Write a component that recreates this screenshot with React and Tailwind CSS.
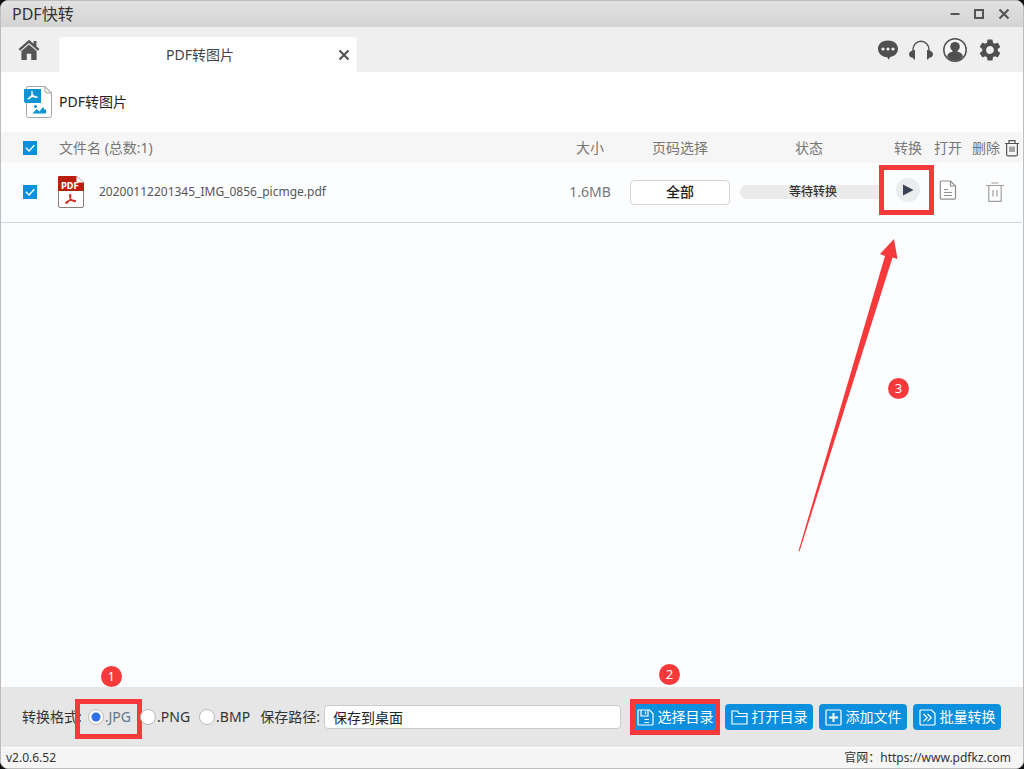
import { useState } from 'react'

const FORMATS = ['JPG', 'PNG', 'BMP']

const FILES = [
  { id: 1, name: '20200112201345_IMG_0856_picmge.pdf', size: '1.6MB', pages: '全部', status: '等待转换' },
]

function MinimizeIcon() {
  return (
    <svg width="12" height="12" viewBox="0 0 12 12" stroke="#555" strokeWidth="2">
      <path d="M1.5 6h9" />
    </svg>
  )
}

function MaximizeIcon() {
  return (
    <svg width="12" height="12" viewBox="0 0 12 12" fill="none" stroke="#555" strokeWidth="2">
      <rect x="2" y="2" width="8" height="8" />
    </svg>
  )
}

function CloseIcon() {
  return (
    <svg width="14" height="14" viewBox="0 0 14 14" stroke="#555" strokeWidth="2.2">
      <path d="M2.5 2.5l9 9M11.5 2.5l-9 9" />
    </svg>
  )
}

function HomeIcon() {
  return (
    <svg width="22" height="22" viewBox="0 0 22 22" fill="#555">
      <path d="M11 .8.6 10l1.5 1.7L11 3.9l8.9 7.8 1.5-1.7-3-2.7V2h-2.8v2.8z" />
      <path d="M11 5.4 3.4 12.1V21h5.4v-6.2h4.4V21h5.4v-8.900z" />
    </svg>
  )
}

function ChatIcon() {
  return (
    <svg width="22" height="22" viewBox="0 0 22 22">
      <path d="M11 1.5C5.2 1.5 1 5 1 9.8s4.2 8.3 9.3 8.4l1.3 2.5 1.6-2.8C17.8 17.2 21 14.2 21 9.8 21 5 16.8 1.5 11 1.5z" fill="#505050" />
      <circle cx="6" cy="10" r="1.6" fill="#eee" />
      <circle cx="11" cy="10" r="1.6" fill="#eee" />
      <circle cx="16" cy="10" r="1.6" fill="#eee" />
    </svg>
  )
}

function HeadsetIcon() {
  return (
    <svg width="24" height="22" viewBox="0 0 24 22" fill="#505050">
      <path d="M4 12.5v-2a8 8.2 0 0 1 16 0v2" fill="none" stroke="#505050" strokeWidth="1.4" />
      <path d="M6 11v9.5H4.8L4 18.8C1.5 18.6 0 17.3 0 15.3s1.5-3.3 4-3.5l.8-.8z" />
      <path d="M18 11v9.5h1.2l.8-1.7c2.5-.2 4-1.5 4-3.5s-1.5-3.3-4-3.5l-.8-.8z" />
    </svg>
  )
}

function UserIcon() {
  return (
    <svg width="24" height="24" viewBox="0 0 24 24">
      <circle cx="12" cy="12" r="11.2" fill="#f4f4f4" stroke="#505050" strokeWidth="1.5" />
      <circle cx="12" cy="8.7" r="4.8" fill="#505050" />
      <path d="M9.5 12h5v1.8c2.8.6 5 1.6 5.4 4.7A11 11 0 0 1 12 23a11 11 0 0 1-7.9-4.5c.4-3.1 2.6-4.1 5.4-4.7z" fill="#505050" />
    </svg>
  )
}

function GearIcon() {
  return (
    <svg width="26" height="26" viewBox="0 0 24 24" fill="#505050">
      <path d="M19.14 12.94c.04-.3.06-.61.06-.94s-.02-.64-.07-.94l2.03-1.58a.49.49 0 0 0 .12-.61l-1.92-3.32a.488.488 0 0 0-.59-.22l-2.39.96c-.5-.38-1.03-.7-1.62-.94l-.36-2.54a.484.484 0 0 0-.48-.41h-3.84c-.24 0-.43.17-.47.41l-.36 2.54c-.59.24-1.13.57-1.62.94l-2.39-.96a.49.49 0 0 0-.59.22L2.74 8.87a.48.48 0 0 0 .12.61l2.03 1.58c-.05.3-.09.63-.09.94s.02.64.07.94l-2.03 1.58a.49.49 0 0 0-.12.61l1.92 3.32c.12.22.37.29.59.22l2.39-.96c.5.38 1.03.7 1.62.94l.36 2.54c.05.24.24.41.48.41h3.84c.24 0 .44-.17.47-.41l.36-2.54c.59-.24 1.13-.56 1.62-.94l2.39.96c.22.08.47 0 .59-.22l1.92-3.32a.48.48 0 0 0-.12-.61zM12 15.6A3.61 3.61 0 0 1 8.4 12c0-1.98 1.62-3.6 3.6-3.6s3.6 1.62 3.6 3.6-1.62 3.6-3.6 3.6z" />
    </svg>
  )
}

function PdfToImageIcon() {
  return (
    <svg width="30" height="34" viewBox="0 0 30 34">
      <path d="M5 1.5h17L28.5 8v22.5a2 2 0 0 1-2 2h-21a2 2 0 0 1-2-2V3A1.5 1.500 0 0 1 5 1.500z" fill="#fff" stroke="#a5a5a5" />
      <path d="M22 1.5V6a2 2 0 0 0 2 2h4.5z" fill="#f1f1f1" stroke="#a5a5a5" />
      <path d="M1 4h17v14H3a2 2 0 0 1-2-2z" fill="#0f93d2" />
      <path d="M9 6.5c.5 3-1 6-4 7.5M9.2 9.2c1 2 2.5 3.3 5 3M6.5 12.4c2-1 4-1.3 6-1" fill="none" stroke="#fff" strokeWidth="1.3" strokeLinecap="round" />
      <circle cx="12.5" cy="21.5" r="1.5" fill="#0f93d2" />
      <path d="M9.5 28.5l4-4.500 3 2.500 3.500-4.500 1.800 3 1.200-1v4.500z" fill="#0f93d2" />
    </svg>
  )
}

function PdfFileIcon() {
  return (
    <svg width="28" height="34" viewBox="0 0 28 34">
      <path d="M3 1.5h16L26.5 8v23a1.5 1.5 0 0 1-1.5 1.5H3A1.5 1.5 0 0 1 1.5 31V3A1.5 1.5 0 0 1 3 1.5z" fill="#fff" stroke="#8c7b7b" />
      <path d="M2 1h17.5L27 7.5V16H1V2a1 1 0 0 1 1-1z" fill="#bd1d0e" />
      <path d="M19.5 1.5V6A1.5 1.5 0 0 0 21 7.5h6z" fill="#fff" stroke="#b9a5a5" strokeWidth=".6" />
      <text x="4" y="13.5" fontSize="8" fontWeight="700" fill="#fff" fontFamily="DejaVu Sans, sans-serif">PDF</text>
      <path d="M13 19.5c1.2 0 .9 3.4-.4 5.5-1.2 2.1-2.8 3.8-3.7 3.3-1-.8 1.5-2.4 4.3-2.9 2.8-.5 5.6-.2 5.3.9-.4 1-3-.2-4.5-2-1.4-1.7-2-4.8-1-4.8z" fill="none" stroke="#cf3324" strokeWidth="1.2" />
    </svg>
  )
}

function HeaderTrashIcon() {
  return (
    <svg width="16" height="18" viewBox="0 0 16 18" fill="none" stroke="#555" strokeWidth="1.2">
      <path d="M1 4.5h14M5 4V1.6h6V4M2.6 4.5v10.9a1.5 1.5 0 0 0 1.5 1.5h7.8a1.5 1.5 0 0 0 1.5-1.5V4.5" />
      <path d="M6 7.5V13M8 7.5V13M10 7.5V13" strokeWidth="1" />
    </svg>
  )
}

function TrashIcon() {
  return (
    <svg width="20" height="22" viewBox="0 0 20 22" fill="none" stroke="#a0a0a0" strokeWidth="1.2">
      <path d="M1 4.5h18M6.5 2h7M3.8 4.5v15.9h12.4V4.5M8 9v6.5M12 9v6.5" />
    </svg>
  )
}

function DocIcon() {
  return (
    <svg width="18" height="20" viewBox="0 0 18 20" fill="none" stroke="#909090" strokeWidth="1.2">
      <path d="M2.5 1h9l5 5v12a1.2 1.2 0 0 1-1.2 1.2H2.5A1.2 1.2 0 0 1 1.3 18V2.2A1.2 1.2 0 0 1 2.5 1z" />
      <path d="M11.5 1v5h5M5 9.5h4M5 12.5h8M5 15.5h8" />
    </svg>
  )
}

function SaveIcon() {
  return (
    <svg width="17" height="17" viewBox="0 0 17 17" fill="none" stroke="#fff" strokeWidth="1.2">
      <path d="M2 1h10.5L16 4.5V15a1 1 0 0 1-1 1H2a1 1 0 0 1-1-1V2a1 1 0 0 1 1-1z" />
      <path d="M4 1v6h7V1M8.5 2.5V5M7.5 10.5H12M7.5 13.5H12" />
    </svg>
  )
}

function FolderIcon() {
  return (
    <svg width="17" height="17" viewBox="0 0 17 17" fill="none" stroke="#fff" strokeWidth="1.2">
      <path d="M1 15V2h5.5L8 4.5h8V15zM4 7.5h12" />
    </svg>
  )
}

function PlusIcon() {
  return (
    <svg width="17" height="17" viewBox="0 0 17 17" fill="none" stroke="#fff">
      <rect x="1" y="1" width="15" height="15" rx="1" strokeWidth="1.2" />
      <path d="M8.5 4v9M4 8.5h9" strokeWidth="2" />
    </svg>
  )
}

function BatchIcon() {
  return (
    <svg width="17" height="17" viewBox="0 0 17 17" fill="none" stroke="#fff" strokeWidth="1.2">
      <path d="M2 1h10.5L16 4.5V15a1 1 0 0 1-1 1H2a1 1 0 0 1-1-1V2a1 1 0 0 1 1-1z" />
      <path d="M4.5 5l3.7 3.7-3.7 3.7M8.5 5l3.7 3.7-3.7 3.7" />
    </svg>
  )
}

const ACTIONS = [
  { label: '选择目录', Icon: SaveIcon, marked: true },
  { label: '打开目录', Icon: FolderIcon },
  { label: '添加文件', Icon: PlusIcon },
  { label: '批量转换', Icon: BatchIcon },
]

function Checkbox({ label, checked, onChange }) {
  return (
    <label className="grid w-[14px] h-[14px]">
      <input type="checkbox" aria-label={label} checked={checked} onChange={onChange}
        className="appearance-none col-start-1 row-start-1 w-[14px] h-[14px] bg-white border border-[#0c8fdd] checked:bg-[#0c8fdd]" />
      {checked && (
        <svg className="col-start-1 row-start-1 pointer-events-none" width="14" height="14" viewBox="0 0 14 14" fill="none" stroke="#fff" strokeWidth="1.3">
          <path d="M2.8 6.8 6 10l5.400-5.800" />
        </svg>
      )}
    </label>
  )
}

function Step({ n, className }) {
  return (
    <span className={`absolute w-[21px] h-[21px] rounded-full bg-[#f63a3c] text-white text-[13px] leading-[20px] text-center ${className}`}>
      {n}
    </span>
  )
}

export default function App() {
  const [format,  setFormat]  = useState('JPG')
  const [path,    setPath]    = useState('保存到桌面')
  const [checked, setChecked] = useState(true)

  return (
    <div className="min-h-screen flex bg-[#111]">
      <div className="flex-1 flex flex-col border border-[#bdbdbd] rounded-lg overflow-hidden bg-[#fcfdff] text-[#333] text-[14px] leading-[20px] font-['Noto_Sans','Noto_Sans_CJK_SC',sans-serif]">

        {/* Title bar */}
        <header className="h-[26px] flex items-center justify-between pl-[11px] pr-3 bg-linear-to-b from-[#e2e2e2] to-[#d4d4d4]">
          <h1 className="text-[16px] leading-[24px]">PDF快转</h1>
          <div className="flex items-center gap-3">
            <button type="button" aria-label="最小化"><MinimizeIcon /></button>
            <button type="button" aria-label="最大化"><MaximizeIcon /></button>
            <button type="button" aria-label="关闭"><CloseIcon /></button>
          </div>
        </header>

        {/* Tabs */}
        <nav className="h-[45px] flex items-end bg-[#efefef]">
          <button type="button" aria-label="首页" className="self-center pl-[17px] w-[58px]"><HomeIcon /></button>
          <div className="w-[298px] h-[35px] flex items-center bg-[#fefefe] rounded-t pl-1 pr-[6px]">
            <a href="#pdf-image" className="flex-1 text-center text-[#444]">PDF转图片</a>
            <button type="button" aria-label="关闭标签"><CloseIcon /></button>
          </div>
          <div className="ml-auto self-center flex items-center gap-[10px] pr-5">
            <button type="button" aria-label="消息"><ChatIcon /></button>
            <button type="button" aria-label="客服"><HeadsetIcon /></button>
            <button type="button" aria-label="用户"><UserIcon /></button>
            <button type="button" aria-label="设置"><GearIcon /></button>
          </div>
        </nav>

        <div className="h-[60px] flex items-center gap-[6px] pl-[22px] bg-[#fefefe]">
          <PdfToImageIcon />
          <h2 className="text-[#222]">PDF转图片</h2>
        </div>

        {/* File list */}
        <main className="relative flex-1 pr-px">
          <table className="w-full table-fixed border-collapse">
            <colgroup>
              <col className="w-[58px]" />
              <col />
              <col className="w-[80px]" />
              <col className="w-[100px]" />
              <col className="w-[158px]" />
              <col className="w-[40px]" />
              <col className="w-[40px]" />
              <col className="w-[54px]" />
            </colgroup>
            <thead>
              <tr className="h-[31px] bg-[#f6f6f6] text-[#777]">
                <th className="pl-[22px]"><Checkbox label="全选" checked={checked} onChange={() => setChecked(!checked)} /></th>
                <th className="font-normal text-left">文件名 (总数:1)</th>
                <th className="font-normal">大小</th>
                <th className="font-normal">页码选择</th>
                <th className="font-normal">状态</th>
                <th className="font-normal">转换</th>
                <th className="font-normal">打开</th>
                <th className="font-normal">
                  <span className="flex items-center gap-1 pl-1 whitespace-nowrap">
                    删除
                    <button type="button" aria-label="全部删除"><HeaderTrashIcon /></button>
                  </span>
                </th>
              </tr>
            </thead>
            <tbody>
              {FILES.map(f => (
                <tr key={f.id} className="h-[59px] border-b border-[#d2d4d6] text-[#777]">
                  <td className="pl-[22px]"><Checkbox label={f.name} checked={checked} onChange={() => setChecked(!checked)} /></td>
                  <td>
                    <div className="flex items-center gap-[14px] -ml-[2px]">
                      <PdfFileIcon />
                      <span className="text-[12px] text-[#555]">{f.name}</span>
                    </div>
                  </td>
                  <td className="text-center">{f.size}</td>
                  <td>
                    <button type="button" className="block w-full h-[25px] bg-white border border-[#d5d5d5] rounded text-[#222] font-medium">{f.pages}</button>
                  </td>
                  <td className="pl-[10px]">
                    <div className="h-[14px] rounded-l-full bg-[#ebebeb] text-[12px] leading-[13px] font-medium text-center text-[#333] pr-[2px]">{f.status}</div>
                  </td>
                  <td className="pb-1">
                    <div className="relative mx-auto w-6 h-6">
                      <span className="absolute -left-[17px] -right-[14px] -inset-y-[13px] border-[5px] border-[#f63a3c] bg-[#fcfdff]" />
                      <button type="button" aria-label="转换" className="relative w-6 h-6 rounded-full bg-[#ebecee] flex items-center justify-center">
                        <svg width="12" height="12" viewBox="0 0 12 12" fill="#3b4254"><path d="M1 .5 11.5 6 1 11.5z" /></svg>
                      </button>
                    </div>
                  </td>
                  <td className="pb-1"><button type="button" aria-label="打开" className="block mx-auto"><DocIcon /></button></td>
                  <td><button type="button" aria-label="删除" className="block mx-auto"><TrashIcon /></button></td>
                </tr>
              ))}
            </tbody>
          </table>

          <svg className="absolute right-[121px] top-[103px]" width="110" height="320" viewBox="0 0 110 320" fill="#f63a3c">
            <path d="M102 4 105.5 24 100.5 22.5 7.5 316.5 6.5 316 93 21 88 19z" />
          </svg>
          <Step n={3} className="right-[114px] top-[246px]" />
        </main>

        {/* Output options */}
        <footer className="h-[60px] flex items-center bg-[#e6e6e6] pl-[21px] pr-[22px]">
          <fieldset className="flex items-center">
            <legend className="float-left">转换格式:</legend>
            <div className="flex items-center gap-[9px] pl-[6px]">
              {FORMATS.map(f => (
                <label key={f} className={`relative flex items-center gap-px ${f === format ? 'text-[#5d7890]' : 'text-[#333]'}`}>
                  {f === 'JPG' && <span className="absolute -left-[13px] -right-[11px] -top-[8px] -bottom-[12px] border-[5px] border-[#f63a3c]" />}
                  {f === 'JPG' && <Step n={1} className="left-[13px] -top-[41px]" />}
                  <input type="radio" name="format" value={f} checked={f === format} onChange={() => setFormat(f)}
                    className="relative appearance-none w-4 h-4 rounded-full bg-white border border-[#bbb] checked:bg-[radial-gradient(circle,#2f6fe4_4px,#fff_5px)]" />
                  .{f}
                </label>
              ))}
            </div>
          </fieldset>

          <label htmlFor="path" className="ml-[10px] whitespace-nowrap">保存路径:</label>
          <input id="path" type="text" value={path} onChange={e => setPath(e.target.value)}
            className="flex-1 min-w-0 ml-1 h-6 px-2 bg-white border border-[#ccc] rounded text-[#222] outline-none" />

          <div className="flex gap-[6px] ml-[10px]">
            {ACTIONS.map(({ label, Icon, marked }) => (
              <div key={label} className="relative">
                <button type="button" className="w-[88px] h-[26px] flex items-center justify-center gap-1 rounded bg-[#0c8fdd] text-white whitespace-nowrap">
                  <Icon />
                  {label}
                </button>
                {marked && <span className="absolute -inset-x-px -inset-y-[5px] border-[5px] border-[#f63a3c]" />}
                {marked && <Step n={2} className="left-[28px] -top-[40px]" />}
              </div>
            ))}
          </div>
        </footer>

        <div className="h-[21px] flex items-center justify-between bg-[#f5f5f5] border-t border-white pl-[5px] pr-3 text-[12px]">
          <span>v2.0.6.52</span>
          <span>官网：<a href="https://www.pdfkz.com">https://www.pdfkz.com</a></span>
        </div>
      </div>
    </div>
  )
}
